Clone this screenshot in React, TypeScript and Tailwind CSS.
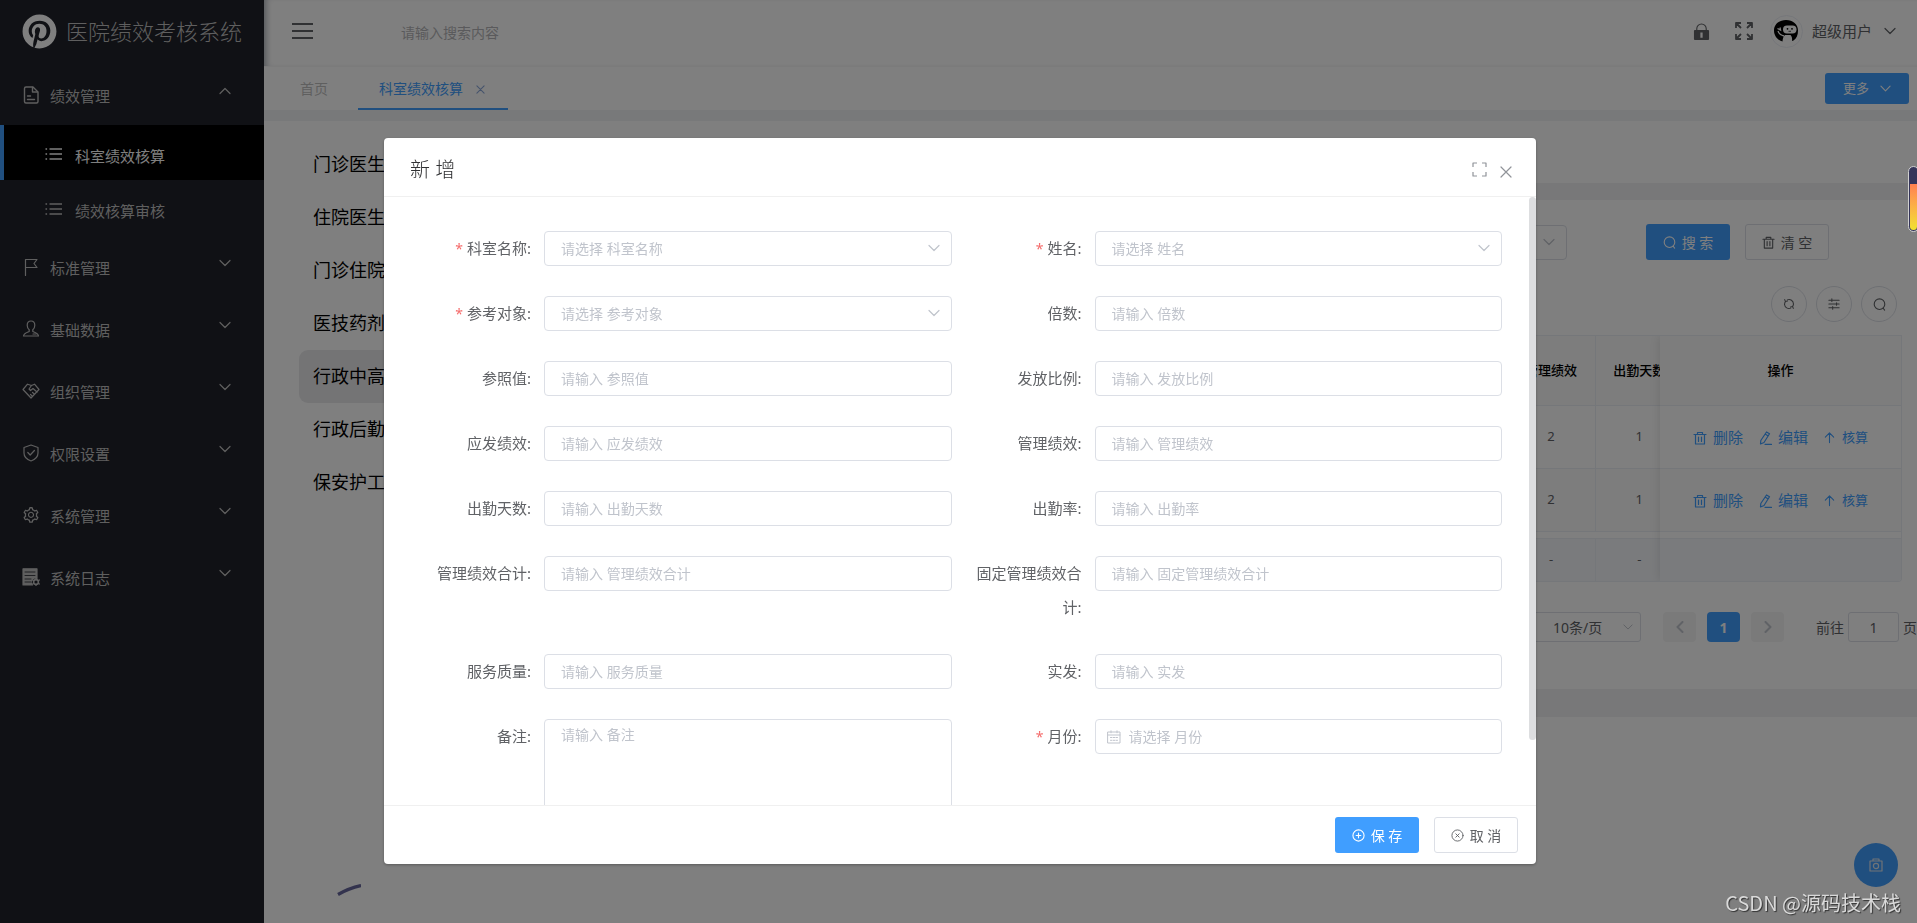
import React, { useState } from 'react';
import { FaPinterest } from 'react-icons/fa';
import { AiOutlineSetting } from 'react-icons/ai';

type IconProps = { className?: string };

const Svg = ({ className, children, box = 18 }: IconProps & { children: React.ReactNode; box?: number }) => (
  <svg
    viewBox={`0 0 ${box} ${box}`}
    className={className}
    fill="none"
    stroke="currentColor"
    strokeWidth="1.2"
    strokeLinecap="round"
    strokeLinejoin="round"
    aria-hidden="true"
  >
    {children}
  </svg>
);

const DocumentIcon = ({ className }: IconProps) => (
  <Svg className={className}>
    <path d="M4 1h7l5 5v9.500a1.500 1.500 0 0 1-1.500 1.500H4a1.500 1.500 0 0 1-1.500-1.500v-13A1.500 1.500 0 0 1 4 1z" strokeWidth="1.400" />
    <path d="M10.500 1.500V6h5M5.500 10h3M5.500 13.500h7" strokeWidth="1.400" />
  </Svg>
);

const FlagIcon = ({ className }: IconProps) => (
  <Svg className={className}>
    <path d="M3.500 17.500V1.500h11.500l-3 4 3 4H3.500" />
  </Svg>
);

const UserIcon = ({ className }: IconProps) => (
  <Svg className={className}>
    <path d="M9 1C6.500 1 5.200 2.800 5.200 5.200c0 2 .8 3.500 2 4.600v1.700c-1.500.8-5.400 1.700-5.700 4.500h15c-.3-2.800-4.200-3.700-5.700-4.500V9.800c1.200-1.100 2-2.600 2-4.600C12.800 2.800 11.500 1 9 1z" />
    <path d="M11 14h3" />
  </Svg>
);

const HandshakeIcon = ({ className }: IconProps) => (
  <Svg className={className}>
    <path d="M5.500 2.200 1 7.500l8 8.500 8-8.500-4.500-5.300L9.500 3.500z" />
    <path d="M9.500 3.500 7 7l1.500 1.500L11 6.500l4 3.500M8.500 12.500l1.500 1.300M10.500 10.500l1.800 1.500" />
  </Svg>
);

const ShieldIcon = ({ className }: IconProps) => (
  <Svg className={className}>
    <path d="M9 1l7 2.500V9c0 4-3 6.600-7 8-4-1.400-7-4-7-8V3.500z" />
    <path d="M5.800 8.500 8.200 11l4.200-4.500" />
  </Svg>
);

const LogIcon = ({ className }: IconProps) => (
  <Svg className={className}>
    <path d="M1 .8h14v9.700a4 4 0 0 0-4.500 6.500H1z" fill="currentColor" />
    <path d="M3 4h10M3 7.500h10M3 11h6M3 14h6" className="stroke-[#20222a]" strokeWidth="0.8" />
    <circle cx="14" cy="14" r="2.400" strokeWidth="1.600" />
    <path d="M14 10v1M14 17v1M10.500 12l.9.500M16.600 15.500l.9.500M10.500 16l.9-.5M16.600 12.500l.9-.5" />
  </Svg>
);

const ListIcon = ({ className }: IconProps) => (
  <Svg className={className}>
    <path d="M4.500 4h12.500M4.500 9h12.500M4.500 14h12.500M.5 4h1.600M.5 9h1.600M.5 14h1.600" strokeWidth="1.700" strokeLinecap="butt" />
  </Svg>
);

const ChevronIcon = ({ className }: IconProps) => (
  <Svg className={className} box={12}>
    <path d="M1 3.500 6 8.500l5-5" />
  </Svg>
);

const SearchIcon = ({ className }: IconProps) => (
  <Svg className={className} box={14}>
    <circle cx="7" cy="6.700" r="5.700" />
    <path d="M11 11l1.500 2" />
  </Svg>
);

const TrashIcon = ({ className }: IconProps) => (
  <Svg className={className} box={14}>
    <path d="M1 3.500h12M4.500 3.500v-2h5v2M2.500 3.500v9.500h9V3.500M5.500 6v4.500M8.500 6v4.500" />
  </Svg>
);

const EditIcon = ({ className }: IconProps) => (
  <Svg className={className} box={14}>
    <path d="M8.500 1l3 1.800-5.500 8.700-3.500 1.500.3-3.500zM7.200 3.100l2.900 1.800M7 13.300h6.500" />
  </Svg>
);

const ArrowUpIcon = ({ className }: IconProps) => (
  <Svg className={className} box={14}>
    <path d="M7 12.500V2M2.500 6.500 7 2l4.500 4.500" />
  </Svg>
);

// Two arcs chasing each other, each with a small hook at its head
const RefreshIcon = ({ className }: IconProps) => (
  <Svg className={className} box={14}>
    <path d="M5 2.200a5.200 5.200 0 0 1 7.200 4.800M2 1.800l.8 2.400 2.400-.6M1.800 7.500c0-1.300.3-2.300 1-3.300" />
    <path d="M9 11.800a5.200 5.200 0 0 1-7.200-4.300M12 12.200l-.8-2.400-2.400.6M12.200 7c0 1.100-.4 2-1 2.800" />
  </Svg>
);

const OperationIcon = ({ className }: IconProps) => (
  <Svg className={className} box={14}>
    <path d="M1 2.500h12M1 7h12M1 11.500h12M4.500 1v3M10 5.500v3M5.500 10v3" />
  </Svg>
);

const LockIcon = ({ className }: IconProps) => (
  <Svg className={className}>
    <path d="M4 7.500V6a5 5 0 0 1 10 0v1.500" />
    <path fillRule="evenodd" d="M2 7.500h14a1 1 0 0 1 1 1V17a1 1 0 0 1-1 1H2a1 1 0 0 1-1-1V8.500a1 1 0 0 1 1-1zM7.800 10v5.500h2.400V10z" fill="currentColor" stroke="none" />
  </Svg>
);

const FullscreenIcon = ({ className }: IconProps) => (
  <Svg className={className}>
    <path d="M1 6V1h5M12 1h5v5M17 12v5h-5M6 17H1v-5M1.500 1.500l4.500 4.500M16.500 1.500 12 6M16.500 16.500 12 12M1.500 16.500 6 12" strokeWidth="1.800" strokeLinecap="butt" />
  </Svg>
);

const Avatar = () => (
  <span className="flex size-[33px] items-center justify-center rounded-full border border-[#ebeef5]">
    <svg viewBox="0 0 24 22" className="h-[22px] w-6" aria-hidden="true">
      <path d="M12 0C5 0 0 4.500 0 10.500c0 4.500 2.500 8 6 10l2.500 1c.2-3 .8-5 2.500-6.500h5.500c1.500 1.500 1.800 3.500 1.500 6l1.500-.5c3-2 4.500-5.500 4.500-10C24 4.500 19 0 12 0z" fill="#000" />
      <rect x="9" y="5.500" width="13.500" height="8" rx="4" fill="#fff" />
      <path d="M3.500 8.500l3 1.500L6 7.500M4 11c1 3 3.500 4.500 6 5" stroke="#fff" strokeWidth="1.300" fill="none" />
      <circle cx="13.500" cy="8.800" r="0.900" fill="#000" />
      <circle cx="18" cy="8.800" r="0.900" fill="#000" />
      <path d="M14.500 11.300h2.500" stroke="#000" strokeWidth="0.700" />
    </svg>
  </span>
);

const menus = [
  { name: '标准管理', Icon: FlagIcon },
  { name: '基础数据', Icon: UserIcon },
  { name: '组织管理', Icon: HandshakeIcon },
  { name: '权限设置', Icon: ShieldIcon },
  { name: '系统管理', Icon: AiOutlineSetting },
  { name: '系统日志', Icon: LogIcon },
];

const groups = ['门诊医生', '住院医生', '门诊住院', '医技药剂', '行政中高', '行政后勤', '保安护工'];

const MenuItem = ({ name, Icon, open }: { name: string; Icon: React.ComponentType<IconProps>; open?: boolean }) => (
  <button className="flex h-[62px] w-full items-center pb-0.5 pl-[22px] pr-[33px] text-[#bfbfbf]">
    <Icon className="mt-1 size-[18px]" />
    <span className="ml-2.5 mt-[7px] text-[15px]">{name}</span>
    <ChevronIcon className={open ? 'mb-1 ml-auto size-3 rotate-180' : 'mb-1 ml-auto size-3'} />
  </button>
);

const SubItem = ({ name, active }: { name: string; active?: boolean }) => (
  <a
    href="#"
    className={
      active
        ? 'flex h-[55px] items-center border-l-4 border-[#409eff] bg-black pl-[41px] text-white'
        : 'flex h-[55px] items-center border-l-4 border-transparent pl-[41px] text-[#bfbfbf]'
    }
  >
    <ListIcon className="mt-0.5 size-[18px]" />
    <span className="ml-3 mt-[7px] text-[15px]">{name}</span>
  </a>
);

const Sidebar = () => (
  <aside className="w-[264px] shrink-0 bg-[#20222a]">
    <div className="flex h-[63px] items-center pl-[22px] text-[#bfbfbf]">
      <FaPinterest className="size-[35px] text-white" />
      <span className="ml-[9px] text-[22px] font-light">医院绩效考核系统</span>
    </div>
    <MenuItem name="绩效管理" Icon={DocumentIcon} open />
    <SubItem name="科室绩效核算" active />
    <SubItem name="绩效核算审核" />
    {menus.map((m) => (
      <MenuItem key={m.name} name={m.name} Icon={m.Icon} />
    ))}
  </aside>
);

const Header = () => (
  <header className="flex h-[67px] items-center border-b border-[#f6f6f6] bg-white pb-1 pl-7 pr-6 shadow-[inset_6px_0_6px_-4px_rgba(0,21,41,0.35)]">
    <button aria-label="折叠菜单" className="flex flex-col gap-[5px]">
      <span className="h-0.5 w-[21px] bg-[#606266]" />
      <span className="h-0.5 w-[21px] bg-[#606266]" />
      <span className="h-0.5 w-[21px] bg-[#606266]" />
    </button>
    <input
      aria-label="搜索"
      placeholder="请输入搜索内容"
      className="ml-[88px] mt-0.5 w-60 text-[14px] outline-none placeholder:text-[#b5b5b8]"
    />
    <div className="ml-auto flex items-center text-[#606266]">
      <button aria-label="锁屏">
        <LockIcon className="size-[17px]" />
      </button>
      <button aria-label="全屏" className="ml-[25px] mr-[17px]">
        <FullscreenIcon className="size-[18px]" />
      </button>
      <Avatar />
      <button className="ml-[9px] flex items-center text-[15px] text-[#606266]">
        超级用户
        <ChevronIcon className="ml-3 size-3" />
      </button>
    </div>
  </header>
);

const TagTabs = () => (
  <nav className="flex h-[43px] items-center bg-white pl-9 pr-[11px] text-[14px]">
    <a href="#" className="text-[#bfbfbf]">首页</a>
    <div className="ml-[30px] flex h-full items-center gap-[13px] border-b-2 border-[#409eff] pl-[21px] pr-[23px] pt-0.5 text-[#409eff]">
      <a href="#">科室绩效核算</a>
      <button aria-label="关闭标签" className="text-[#8aa6d8]">
        <Svg className="mt-0.5 size-[9px]" box={10}>
          <path d="M1 1l8 8M9 1 1 9" />
        </Svg>
      </button>
    </div>
    <button className="ml-auto flex h-[31px] w-[84px] items-center justify-center gap-[11px] rounded-[3px] bg-[#409eff] text-[13px] text-white">
      更多
      <ChevronIcon className="size-[11px]" />
    </button>
  </nav>
);

const DataTable = () => (
  <div className="flex overflow-hidden rounded-b border-y border-r border-[#ebeef5] text-[13px] text-[#606266]">
    <div className="min-w-0 flex-1 overflow-hidden">
      <table className="w-[calc(100%+23px)] table-fixed border-collapse text-center">
        <thead>
          <tr className="h-[69px] border-b border-[#ebeef5] bg-[#fafafa] text-black">
            <th className="border-r border-[#ebeef5] font-medium">姓名</th>
            <th className="w-[88px] border-r border-[#ebeef5] font-medium">管理绩效</th>
            <th className="w-[88px] font-medium">出勤天数</th>
          </tr>
        </thead>
        <tbody>
          {[1, 2].map((n) => (
            <tr key={n} className="h-[63px] border-b border-[#ebeef5] even:bg-[#fafafa]">
              <td className="border-r border-[#ebeef5]" />
              <td className="border-r border-[#ebeef5]">2</td>
              <td>1</td>
            </tr>
          ))}
        </tbody>
        <tfoot>
          <tr className="h-[7px] border-b border-[#ebeef5]">
            <td colSpan={3} />
          </tr>
          <tr className="h-[43px] bg-[#f5f7fa]">
            <td className="border-r border-[#ebeef5]" />
            <td className="border-r border-[#ebeef5]">-</td>
            <td>-</td>
          </tr>
        </tfoot>
      </table>
    </div>
    <table className="relative w-[241px] border-collapse bg-white text-center shadow-[0_0_10px_rgba(0,0,0,0.12)]">
      <thead>
        <tr className="h-[69px] border-b border-[#ebeef5] bg-[#fafafa] text-black">
          <th className="font-medium">操作</th>
        </tr>
      </thead>
      <tbody>
        {[1, 2].map((n) => (
          <tr key={n} className="h-[63px] border-b border-[#ebeef5] even:bg-[#fafafa]">
            <td>
              <div className="flex items-center justify-center gap-[15px] pt-0.5 text-[15px] text-[#409eff]">
                <button className="flex items-center gap-1.5">
                  <TrashIcon className="size-[14px]" />
                  删除
                </button>
                <button className="flex items-center gap-1.5">
                  <EditIcon className="size-[14px]" />
                  编辑
                </button>
                <button className="flex items-center gap-1.5 text-[13px]">
                  <ArrowUpIcon className="size-[13px]" />
                  核算
                </button>
              </div>
            </td>
          </tr>
        ))}
      </tbody>
      <tfoot>
        <tr className="h-[7px] border-b border-[#ebeef5]">
          <td />
        </tr>
        <tr className="h-[43px] bg-[#f5f7fa]">
          <td />
        </tr>
      </tfoot>
    </table>
  </div>
);

const Pagination = () => (
  <div className="mt-[30px] flex h-[30px] items-center justify-end whitespace-nowrap pr-[3px] text-[14px] text-[#606266]">
    <div className="relative">
      <select aria-label="每页条数" className="h-[30px] w-28 appearance-none rounded-[3px] border border-[#dcdfe6] bg-white pl-[23px]">
        <option>10条/页</option>
      </select>
      <ChevronIcon className="pointer-events-none absolute right-2 top-2.5 size-2.5 text-[#c0c4cc]" />
    </div>
    <button aria-label="上一页" className="ml-[22px] flex h-[30px] w-[33px] items-center justify-center rounded-sm bg-[#f4f4f5] text-[#c0c4cc]">
      <ChevronIcon className="size-3 rotate-90 stroke-2" />
    </button>
    <button className="ml-[11px] h-[30px] w-[33px] rounded-sm bg-[#409eff] font-bold text-white">1</button>
    <button aria-label="下一页" className="ml-[11px] flex h-[30px] w-[33px] items-center justify-center rounded-sm bg-[#f4f4f5] text-[#c0c4cc]">
      <ChevronIcon className="size-3 -rotate-90 stroke-2" />
    </button>
    <label className="ml-8 flex items-center gap-1">
      前往
      <input defaultValue="1" className="h-[30px] w-[51px] rounded-[3px] border border-[#dcdfe6] text-center" />
      页
    </label>
  </div>
);

const Content = () => (
  <div className="flex flex-1 bg-white">
    <ul className="w-60 shrink-0 pl-[35px] pt-[17px] text-[18px] text-black">
      {groups.map((g) => (
        <li
          key={g}
          className={
            g === '行政中高'
              ? 'flex h-[53px] items-center rounded-[9px] bg-[#e9e9eb] pl-3.5'
              : 'flex h-[53px] items-center pl-3.5'
          }
        >
          {g}
        </li>
      ))}
    </ul>
    <main className="flex min-w-0 flex-1 flex-col bg-[#f0f0f2]">
      <div className="mb-[17px] h-[62px] shrink-0 bg-white" />
      <section className="mb-7 bg-white pb-[47px] pl-4 pt-6">
        <div className="flex items-center justify-end pr-[91px]">
          <div className="relative mr-[79px]">
            <select aria-label="参考对象筛选" className="block h-[35px] w-60 appearance-none rounded border border-[#dcdfe6]" />
            <ChevronIcon className="pointer-events-none absolute right-3 top-[11px] size-3 text-[#c0c4cc]" />
          </div>
          <button className="mr-[15px] flex h-9 w-[84px] items-center justify-center gap-1.5 rounded-[3px] bg-[#409eff] text-[14px] text-white">
            <SearchIcon className="size-[13px]" />
            搜 索
          </button>
          <button className="flex h-9 w-[84px] items-center justify-center gap-1.5 rounded-[3px] border border-[#dcdfe6] text-[14px] text-[#606266]">
            <TrashIcon className="size-[13px]" />
            清 空
          </button>
        </div>
        <div className="mb-[13px] mt-[26px] flex justify-end gap-[9px] pr-[23px] text-[#606266]">
          <button aria-label="刷新" className="flex size-9 items-center justify-center rounded-full border border-[#dcdfe6]">
            <RefreshIcon className="size-[12px]" />
          </button>
          <button aria-label="列设置" className="flex size-9 items-center justify-center rounded-full border border-[#dcdfe6]">
            <OperationIcon className="size-[12px]" />
          </button>
          <button aria-label="显示搜索" className="flex size-9 items-center justify-center rounded-full border border-[#dcdfe6]">
            <SearchIcon className="size-[13px]" />
          </button>
        </div>
        <div className="pr-[18px]">
          <DataTable />
        </div>
        <Pagination />
      </section>
      <div className="flex-1 bg-white" />
    </main>
  </div>
);

type Field = { label: string; kind?: 'select' | 'date' | 'textarea'; required?: boolean };

const fields: Field[] = [
  { label: '科室名称', kind: 'select', required: true },
  { label: '姓名', kind: 'select', required: true },
  { label: '参考对象', kind: 'select', required: true },
  { label: '倍数' },
  { label: '参照值' },
  { label: '发放比例' },
  { label: '应发绩效' },
  { label: '管理绩效' },
  { label: '出勤天数' },
  { label: '出勤率' },
  { label: '管理绩效合计' },
  { label: '固定管理绩效合计' },
  { label: '服务质量' },
  { label: '实发' },
  { label: '备注', kind: 'textarea' },
  { label: '月份', kind: 'date', required: true },
];

const control =
  'w-full rounded border border-[#dcdfe6] bg-white px-4 text-[14px] outline-none placeholder:text-[#c0c4cc]';

const FormField = ({ field }: { field: Field }) => {
  const { label, kind, required } = field;
  return (
    <div className="flex items-start">
      <label htmlFor={label} className="w-[120px] shrink-0 pr-[13px] text-right text-[15px] leading-[34px] text-[#606266]">
        {required && <span className="mr-1 text-[14px] text-[#f56c6c]">*</span>}
        {label}:
      </label>
      <div className="relative min-w-0 flex-1">
        {kind === 'select' && (
          <>
            <select id={label} className={`${control} block h-[35px] appearance-none text-[#c0c4cc]`}>
              <option>请选择 {label}</option>
            </select>
            <ChevronIcon className="pointer-events-none absolute right-3 top-[11px] size-3 text-[#c0c4cc]" />
          </>
        )}
        {kind === 'textarea' && (
          <textarea id={label} rows={5} placeholder={`请输入 ${label}`} className={`${control} block resize-none py-1`} />
        )}
        {kind === 'date' && (
          <>
            <input id={label} placeholder={`请选择 ${label}`} className={`${control} block h-[35px] pl-[33px]`} />
            <Svg className="pointer-events-none absolute left-3 top-[11px] size-[14px] text-[#c0c4cc]" box={14}>
              <path d="M1 2h12v11H1zM1 5h12M4 .8v2M10 .8v2M3.500 7.500h1.500M6.300 7.500h1.500M9 7.500h1.500M3.500 10.300h1.500M6.300 10.300h1.500M9 10.300h1.500" strokeWidth="1" />
            </Svg>
          </>
        )}
        {!kind && <input id={label} placeholder={`请输入 ${label}`} className={`${control} block h-[35px]`} />}
      </div>
    </div>
  );
};

const AddDialog = ({ onClose }: { onClose: () => void }) => (
  <div className="fixed inset-y-0 -right-[3px] left-0 bg-black/50">
    <div role="dialog" aria-label="新增" className="mx-auto mt-[15vh] w-3/5 rounded-sm bg-white shadow-[0_1px_3px_rgba(0,0,0,0.3)]">
      <div className="flex h-[59px] items-center border-b border-[#f0f0f0] pl-[26px] pr-6 pt-[5px]">
        <h2 className="text-[20px] font-light text-[#303133]">新 增</h2>
        <button aria-label="全屏" className="ml-auto text-[#909399]">
          <Svg className="size-[15px]" box={15}>
            <path d="M1 5V1h4M10 1h4v4M14 10v4h-4M5 14H1v-4" strokeLinecap="butt" />
          </Svg>
        </button>
        <button aria-label="关闭" onClick={onClose} className="ml-[13px] mt-1 text-[#909399]">
          <Svg className="size-3" box={12}>
            <path d="M1 1l10 10M11 1 1 11" />
          </Svg>
        </button>
      </div>
      <div className="relative">
        <form className="grid max-h-[608px] grid-cols-2 gap-x-[23px] gap-y-[30px] overflow-y-auto pb-8 pl-10 pr-[34px] pt-[34px] [scrollbar-width:none]">
          {fields.map((f) => (
            <FormField key={f.label} field={f} />
          ))}
        </form>
        <div className="absolute right-0 top-0 h-[543px] w-[7px] rounded bg-[#dddee0]" />
      </div>
      <div className="flex h-[59px] items-center justify-end gap-[15px] border-t border-[#f0f0f0] pr-[18px]">
        <button className="flex h-9 w-[84px] items-center justify-center gap-1.5 rounded-[3px] bg-[#409eff] text-[14px] text-white">
          <Svg className="size-[13px]" box={14}>
            <circle cx="7" cy="7" r="6" />
            <path d="M7 4.500v5M4.500 7h5" />
          </Svg>
          保 存
        </button>
        <button onClick={onClose} className="flex h-9 w-[84px] items-center justify-center gap-1.5 rounded-[3px] border border-[#dcdfe6] text-[14px] text-[#606266]">
          <Svg className="size-[13px]" box={14}>
            <circle cx="7" cy="7" r="6" strokeWidth="1" />
            <path d="M5.200 5.200l3.600 3.600M8.800 5.200 5.200 8.800" strokeWidth="1" />
          </Svg>
          取 消
        </button>
      </div>
    </div>
  </div>
);

const App = () => {
  const [open, setOpen] = useState(true);

  return (
    <div className="relative h-screen overflow-hidden font-['Noto_Sans','Noto_Sans_CJK_SC',sans-serif]">
      <div className="-mr-[3px] flex h-full">
        <Sidebar />
        <div className="flex min-w-0 flex-1 flex-col">
          <Header />
          <TagTabs />
          <div className="h-[11px] shrink-0 bg-[#f0f2f5]" />
          <Content />
        </div>
      </div>

      {/* Floating widgets */}
      <svg viewBox="0 0 24 12" className="absolute bottom-[27px] left-[337px] h-3 w-6" aria-hidden="true">
        <path d="M1 10.500Q12 4 24 1.500" fill="none" stroke="#66669c" strokeWidth="3.200" />
      </svg>
      <button aria-label="截图" className="absolute bottom-9 right-[19px] flex size-11 items-center justify-center rounded-full bg-[#409eff] text-[#dfe6ee]">
        <Svg className="size-[14px]" box={14}>
          <path d="M1 3h12v10H1zM4 3V1h6v2" />
          <circle cx="7" cy="8" r="2.600" />
        </Svg>
      </button>

      {open && <AddDialog onClose={() => setOpen(false)} />}

      <div className="absolute -right-0.5 top-[166px] h-[66px] w-[11px] rounded-full border border-[#d0d0d0] bg-[#35355a] px-px pb-px pt-[17px]">
        <div className="h-full rounded-b-full bg-linear-to-b from-[#ff7f50] to-[#f0e130]" />
      </div>
      <div className="pointer-events-none absolute bottom-1.5 right-4 font-['Noto_Sans_CJK_SC',sans-serif] text-[20px] leading-7 text-[#d9d9d9] [text-shadow:1px_1px_1px_#333]">
        CSDN @源码技术栈
      </div>
    </div>
  );
};

export default App;
